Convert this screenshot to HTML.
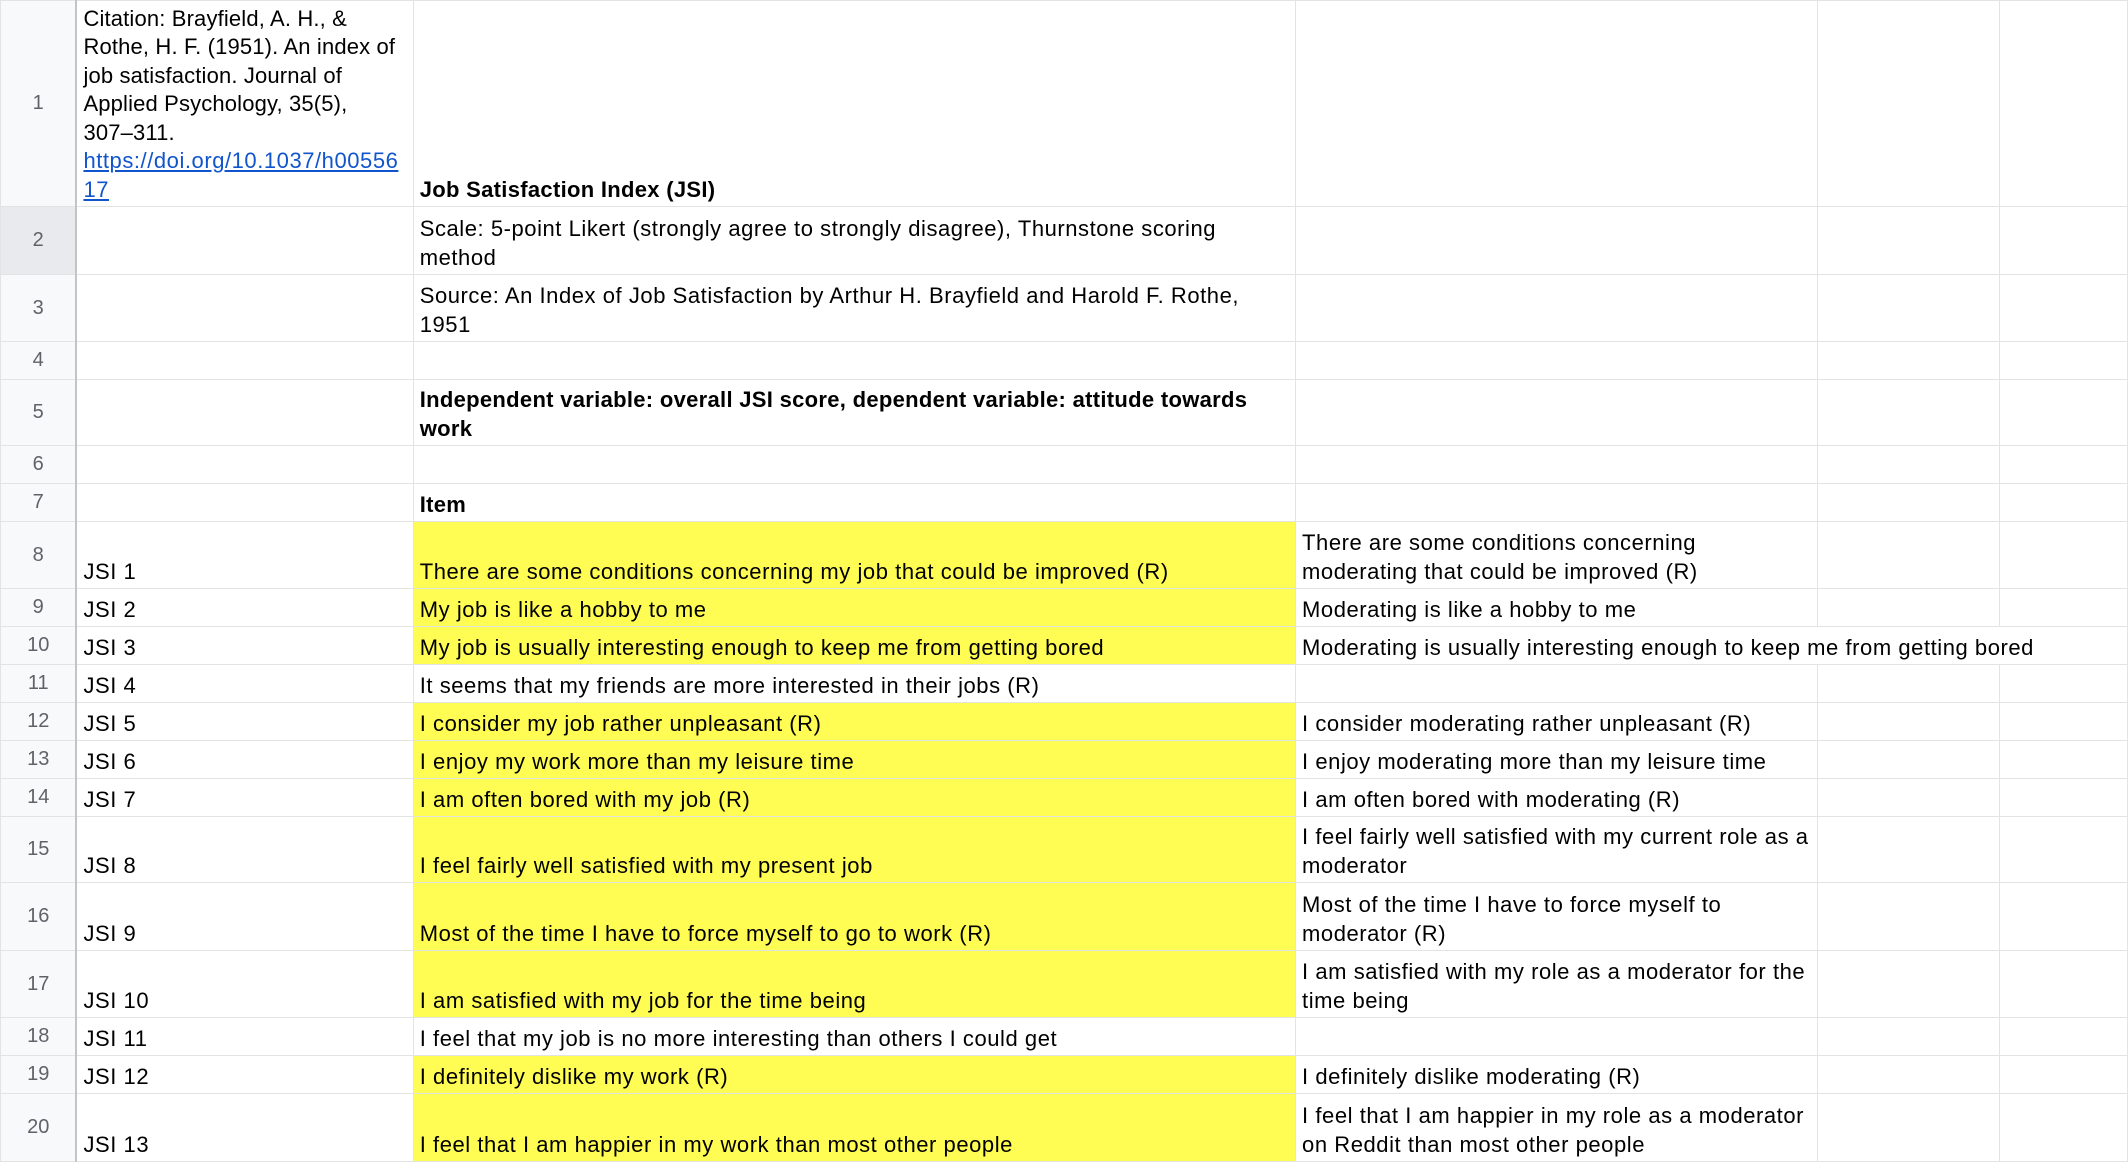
<!DOCTYPE html>
<html><head><meta charset="utf-8"><style>
html,body{margin:0;padding:0;background:#fff;width:2128px;height:1164px;overflow:hidden}
table{border-collapse:collapse;table-layout:fixed;font-family:"Liberation Sans",Arial,sans-serif;font-size:22px;letter-spacing:0.55px;color:#000}
td{border:1.5px solid #e2e3e3;vertical-align:bottom;padding:0 6px 2px 6px;line-height:28.5px;overflow:hidden;white-space:normal}
td.h{background:#f8f9fa;color:#5f6368;text-align:center;vertical-align:middle;font-size:20px;letter-spacing:0;border-right:2px solid #c4c4c4;padding:0}
td.hs{background:#e8eaed}
td.c{letter-spacing:0.15px}
.y{background:#fffd54}
b{font-weight:bold;letter-spacing:0.3px}
a{color:#1155cc;text-decoration:underline;overflow-wrap:anywhere;letter-spacing:0.55px}
.nw{white-space:nowrap;overflow:visible}
</style></head><body>
<table>
<colgroup><col style="width:76px"><col style="width:337px"><col style="width:883px"><col style="width:522px"><col style="width:182px"><col style="width:128px"></colgroup>
<tr style="height:206px"><td class="h">1</td><td class="c">Citation: Brayfield, A. H., &amp;<br>Rothe, H. F. (1951). An index of<br>job satisfaction. Journal of<br>Applied Psychology, 35(5),<br>307–311.<br><a>https://doi.org/10.1037/h0055617</a></td><td><b>Job Satisfaction Index (JSI)</b></td><td></td><td></td><td></td></tr>
<tr style="height:68px"><td class="h hs">2</td><td></td><td>Scale: 5-point Likert (strongly agree to strongly disagree), Thurnstone scoring method</td><td></td><td></td><td></td></tr>
<tr style="height:67px"><td class="h">3</td><td></td><td>Source: An Index of Job Satisfaction by Arthur H. Brayfield and Harold F. Rothe, 1951</td><td></td><td></td><td></td></tr>
<tr style="height:38px"><td class="h">4</td><td></td><td></td><td></td><td></td><td></td></tr>
<tr style="height:66px"><td class="h">5</td><td></td><td><b>Independent variable: overall JSI score, dependent variable: attitude towards work</b></td><td></td><td></td><td></td></tr>
<tr style="height:38px"><td class="h">6</td><td></td><td></td><td></td><td></td><td></td></tr>
<tr style="height:38px"><td class="h">7</td><td></td><td><b>Item</b></td><td></td><td></td><td></td></tr>
<tr style="height:67px"><td class="h">8</td><td>JSI 1</td><td class="y">There are some conditions concerning my job that could be improved (R)</td><td>There are some conditions concerning moderating that could be improved (R)</td><td></td><td></td></tr>
<tr style="height:38px"><td class="h">9</td><td>JSI 2</td><td class="y">My job is like a hobby to me</td><td>Moderating is like a hobby to me</td><td></td><td></td></tr>
<tr style="height:38px"><td class="h">10</td><td>JSI 3</td><td class="y">My job is usually interesting enough to keep me from getting bored</td><td colspan="3" class="nw">Moderating is usually interesting enough to keep me from getting bored</td></tr>
<tr style="height:38px"><td class="h">11</td><td>JSI 4</td><td>It seems that my friends are more interested in their jobs (R)</td><td></td><td></td><td></td></tr>
<tr style="height:38px"><td class="h">12</td><td>JSI 5</td><td class="y">I consider my job rather unpleasant (R)</td><td>I consider moderating rather unpleasant (R)</td><td></td><td></td></tr>
<tr style="height:38px"><td class="h">13</td><td>JSI 6</td><td class="y">I enjoy my work more than my leisure time</td><td>I enjoy moderating more than my leisure time</td><td></td><td></td></tr>
<tr style="height:38px"><td class="h">14</td><td>JSI 7</td><td class="y">I am often bored with my job (R)</td><td>I am often bored with moderating (R)</td><td></td><td></td></tr>
<tr style="height:66px"><td class="h">15</td><td>JSI 8</td><td class="y">I feel fairly well satisfied with my present job</td><td>I feel fairly well satisfied with my current role as a moderator</td><td></td><td></td></tr>
<tr style="height:68px"><td class="h">16</td><td>JSI 9</td><td class="y">Most of the time I have to force myself to go to work (R)</td><td>Most of the time I have to force myself to moderator (R)</td><td></td><td></td></tr>
<tr style="height:67px"><td class="h">17</td><td>JSI 10</td><td class="y">I am satisfied with my job for the time being</td><td>I am satisfied with my role as a moderator for the time being</td><td></td><td></td></tr>
<tr style="height:38px"><td class="h">18</td><td>JSI 11</td><td>I feel that my job is no more interesting than others I could get</td><td></td><td></td><td></td></tr>
<tr style="height:38px"><td class="h">19</td><td>JSI 12</td><td class="y">I definitely dislike my work (R)</td><td>I definitely dislike moderating (R)</td><td></td><td></td></tr>
<tr style="height:68px"><td class="h">20</td><td>JSI 13</td><td class="y">I feel that I am happier in my work than most other people</td><td>I feel that I am happier in my role as a moderator on Reddit than most other people</td><td></td><td></td></tr>
</table>
</body></html>
